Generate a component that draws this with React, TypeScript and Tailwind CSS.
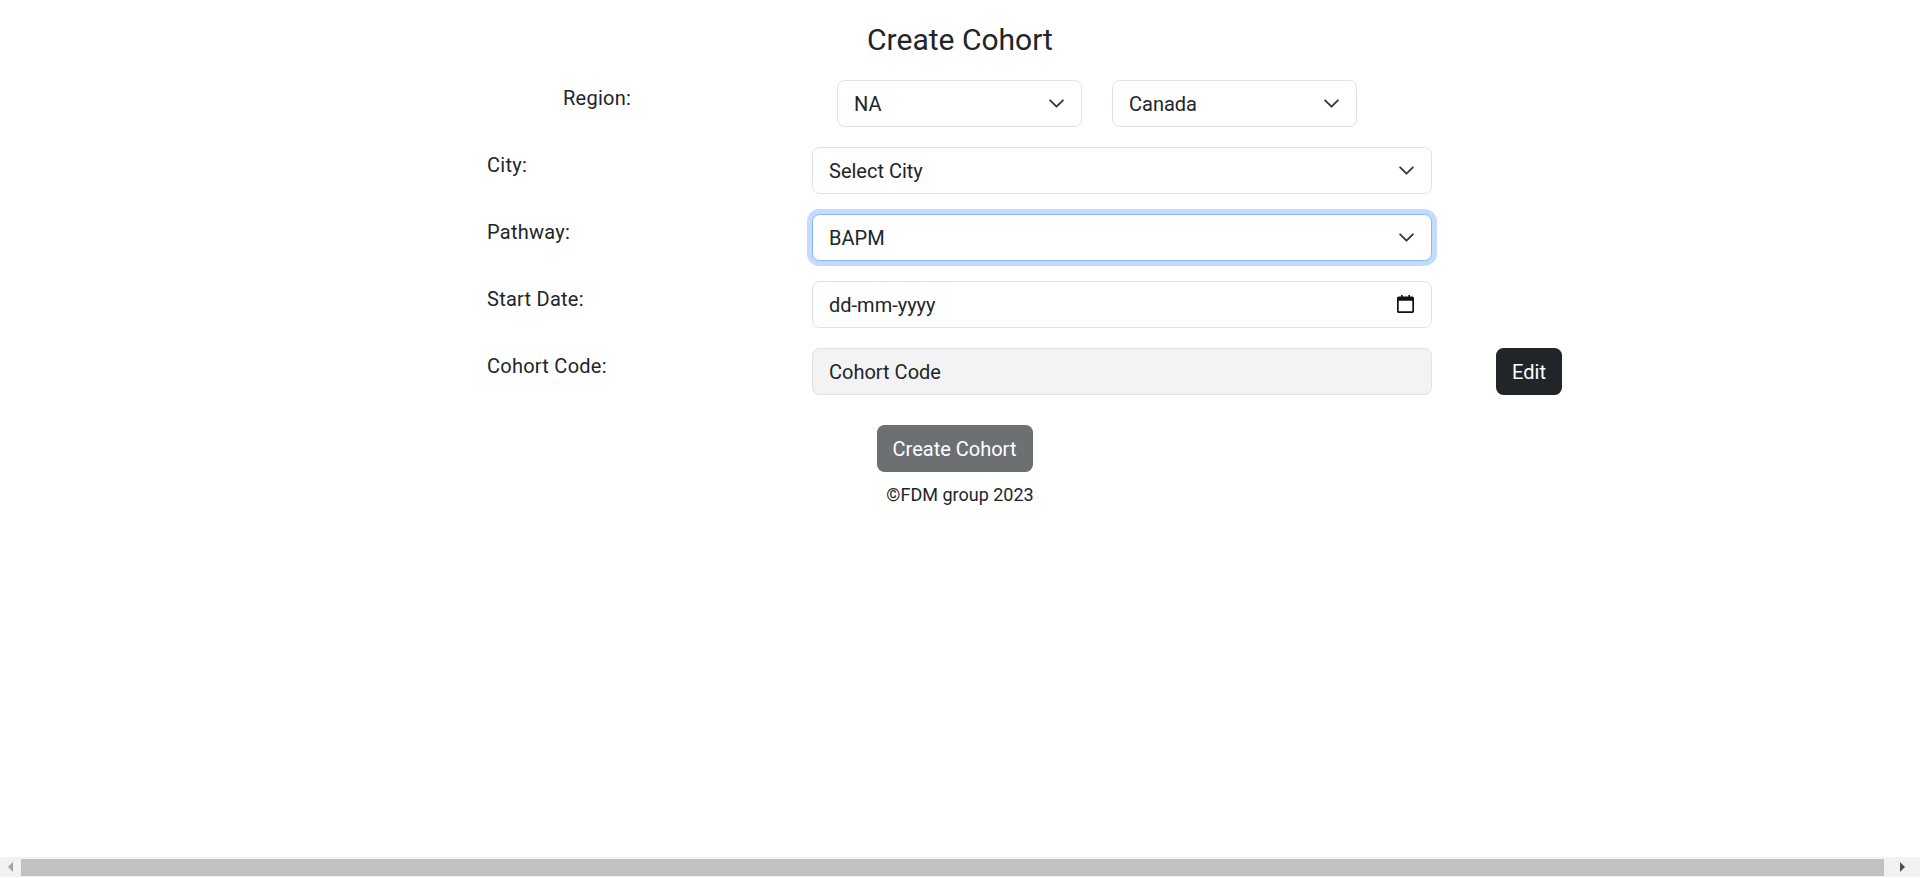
import { ChangeEvent, useState } from "react";

const labelClass = "text-[20px] tracking-[0.25px] leading-[30px] pt-[3px] text-[#212529]";
const fieldClass =
  "h-[47px] w-full rounded-[7.5px] border px-[16px] text-[20px] leading-[30px] text-[#212529] outline-none appearance-none";

function Chevron() {
  return (
    <svg
      viewBox="0 0 16 16"
      className="pointer-events-none absolute right-[17px] top-[15px] h-[17px] w-[17px]"
      fill="none"
      stroke="#343a40"
      strokeWidth="1.75"
      strokeLinecap="round"
      strokeLinejoin="round"
      aria-hidden={true}
    >
      <path d="m2 5 6 6 6-6" />
    </svg>
  );
}

function Select({
  value,
  options,
  className,
  focused,
}: {
  value: string;
  options: string[];
  className: string;
  focused?: boolean;
}) {
  const [current, setCurrent] = useState(value);
  return (
    <div className={`relative ${className}`}>
      <select
        value={current}
        onChange={(e: ChangeEvent<HTMLSelectElement>) => setCurrent(e.target.value)}
        className={
          focused
            ? `${fieldClass} border-[#86b7fe] bg-white shadow-[0_0_0_5px_rgba(13,110,253,0.25)]`
            : `${fieldClass} border-[#dee2e6] bg-white`
        }
      >
        {options.map((o) => (
          <option key={o}>{o}</option>
        ))}
      </select>
      <Chevron />
    </div>
  );
}

function Scrollbar() {
  return (
    <div className="mb-px flex h-[20px] shrink-0 items-center bg-[#f1f1f1]">
      <div className="flex w-[21px] shrink-0 justify-center">
        <div className="h-0 w-0 border-y-[5px] border-r-[5px] border-y-transparent border-r-[#a3a3a3]" />
      </div>
      <div className="h-[17px] flex-1 bg-[#c1c1c1]" />
      <div className="flex w-[36px] shrink-0 justify-center">
        <div className="h-0 w-0 border-y-[5px] border-l-[5px] border-y-transparent border-l-[#505050]" />
      </div>
    </div>
  );
}

export default function App() {
  return (
    <div className="flex h-screen flex-col overflow-hidden bg-white font-['Roboto',sans-serif] text-[#212529]">
      <div className="flex-1">
        <h3 className="pt-[19px] text-center text-[30px] leading-[42px] font-normal">Create Cohort</h3>

        <form className="mt-[19px] flex flex-col gap-[20px] pl-[487px]">
          <div className="flex">
            <div className={`w-[350px] pl-[76px] ${labelClass}`}>Region:</div>
            <Select value="NA" options={["NA", "EMEA", "APAC"]} className="w-[245px]" />
            <Select value="Canada" options={["Canada", "USA"]} className="ml-[30px] w-[245px]" />
          </div>

          <div className="flex">
            <div className={`w-[325px] ${labelClass}`}>City:</div>
            <Select value="Select City" options={["Select City"]} className="w-[620px]" />
          </div>

          <div className="flex">
            <div className={`w-[325px] ${labelClass}`}>Pathway:</div>
            <Select value="BAPM" options={["BAPM", "Technical"]} className="w-[620px]" focused={true} />
          </div>

          <div className="flex">
            <div className={`w-[325px] ${labelClass}`}>Start Date:</div>
            <div className="relative w-[620px]">
              <input className={`${fieldClass} border-[#dee2e6] bg-white`} defaultValue="dd-mm-yyyy" />
              <svg
                viewBox="0 0 17 18"
                className="pointer-events-none absolute right-[18px] top-[14px] h-[18px] w-[17px]"
                aria-hidden={true}
              >
                <path
                  fill="#111"
                  d="M4 0h1.600v1.600h5.800V0H13v1.600h2.200c1 0 1.800.8 1.800 1.800v12.800c0 1-.8 1.800-1.800 1.800H1.800C.8 18 0 17.200 0 16.200V3.400C0 2.400.8 1.600 1.800 1.600H4V0Zm-2.300 5.800v10.500h13.600V5.800H1.700Z"
                />
              </svg>
            </div>
          </div>

          <div className="flex items-start">
            <div className={`w-[325px] ${labelClass}`}>Cohort Code:</div>
            <div className="w-[620px]">
              <input className={`${fieldClass} border-[#dee2e6] bg-[#f3f3f3]`} defaultValue="Cohort Code" readOnly={true} />
            </div>
            <button
              type="button"
              className="ml-[64px] h-[47px] w-[66px] rounded-[7.5px] bg-[#212529] text-[20px] text-white"
            >
              Edit
            </button>
          </div>
        </form>

        <div className="mt-[30px] flex flex-col items-center">
          <button
            type="button"
            className="mr-[11px] h-[47px] w-[156px] rounded-[7.5px] bg-[#6d7073] text-[20px] text-white"
          >
            Create Cohort
          </button>
          <p className="mt-[10px] text-[18px] leading-[26px]">
            <span className="font-bold">©</span>FDM group 2023
          </p>
        </div>
      </div>
      <Scrollbar />
    </div>
  );
}
